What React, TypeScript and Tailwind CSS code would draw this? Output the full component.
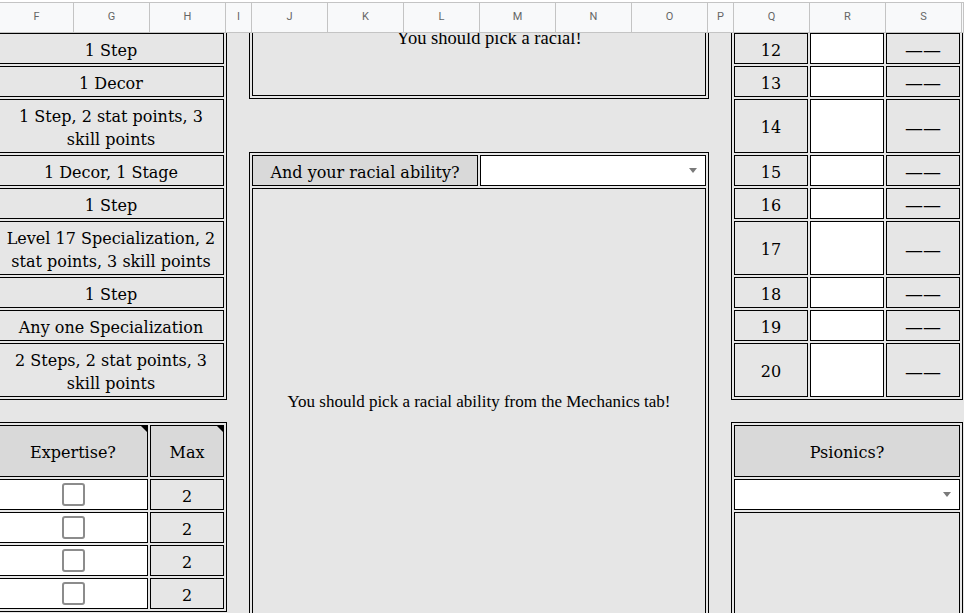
import React from 'react';

const serif = "font-['DejaVu_Serif',serif]";

const leftRows = [
  { text: '1 Step', tall: false },
  { text: '1 Decor', tall: false },
  { text: '1 Step, 2 stat points, 3 skill points', tall: true },
  { text: '1 Decor, 1 Stage', tall: false },
  { text: '1 Step', tall: false },
  { text: 'Level 17 Specialization, 2 stat points, 3 skill points', tall: true },
  { text: '1 Step', tall: false },
  { text: 'Any one Specialization', tall: false },
  { text: '2 Steps, 2 stat points, 3 skill points', tall: true },
];

const levels = [
  { n: 12, tall: false },
  { n: 13, tall: false },
  { n: 14, tall: true },
  { n: 15, tall: false },
  { n: 16, tall: false },
  { n: 17, tall: true },
  { n: 18, tall: false },
  { n: 19, tall: false },
  { n: 20, tall: true },
];

const headers = ['F', 'G', 'H', 'I', 'J', 'K', 'L', 'M', 'N', 'O', 'P', 'Q', 'R', 'S', ''];

function Cell({ children, className = '', text = true }: { children?: React.ReactNode; className?: string; text?: boolean }) {
  return (
    <div className={`flex items-center justify-center border border-black text-center ${text ? 'pt-[4px]' : ''} ${className}`}>
      {children}
    </div>
  );
}

// black corner mark that sheets shows for a note
function NoteMark() {
  return <span className="absolute top-0 right-0 h-0 w-0 border-t-[6px] border-l-[6px] border-t-black border-l-transparent" />;
}

function DropArrow() {
  return <span className="h-0 w-0 border-x-[4px] border-t-[5px] border-x-transparent border-t-[#7a7a7a]" />;
}

function Checkbox() {
  return <span className="block h-[23px] w-[23px] rounded-[3px] border-2 border-[#8c8c8c] bg-white" />;
}

export default function App() {
  return (
    <div className={`h-[613px] w-[964px] overflow-hidden bg-[#e6e6e6] text-black ${serif}`}>
      <div className="h-[33px] bg-white pt-[2px]">
        <div className="grid h-[31px] grid-cols-[74px_76px_76px_26px_76px_76px_76px_76px_76px_76px_26px_76px_76px_76px_1fr] border-y border-[#c4c4c4] bg-[#f8f9fa] font-['Roboto',sans-serif] text-[11px] text-[#666]">
          {headers.map((h, i) => (
            <div key={i} className="flex items-center justify-center border-r border-[#c4c4c4]">
              {h}
            </div>
          ))}
        </div>
      </div>

      <div className="flex h-[580px] items-start overflow-hidden">
        {/* left: rewards per level + expertise */}
        <div className="ml-[-5px] flex w-[232px] shrink-0 flex-col">
          <div className="mt-[-3px] flex flex-col gap-[2px] border border-black p-[2px] text-[16px] leading-[23px]">
            {leftRows.map((r, i) => (
              <Cell key={i} className={r.tall ? 'h-[54px] px-1' : 'h-[31px] px-1'}>
                {r.text}
              </Cell>
            ))}
          </div>
          <div className="mt-[22px] flex flex-col gap-[2px] border border-black p-[2px] text-[16px]">
            <div className="flex gap-[2px]">
              <Cell className="relative h-[52px] w-[150px] bg-[#d9d9d9]">
                Expertise?
                <NoteMark />
              </Cell>
              <Cell className="relative h-[52px] flex-1 bg-[#d9d9d9]">
                Max
                <NoteMark />
              </Cell>
            </div>
            {[0, 1, 2, 3].map((i) => (
              <div key={i} className="flex gap-[2px]">
                <Cell text={false} className="h-[31px] w-[150px] bg-white">
                  <Checkbox />
                </Cell>
                <Cell className="h-[31px] flex-1">2</Cell>
              </div>
            ))}
          </div>
        </div>

        {/* middle: racial */}
        <div className="ml-[22px] flex w-[460px] shrink-0 flex-col">
          <div className="mt-[-10px] border border-black p-[2px]">
            <div className="flex h-[70px] justify-center border border-black pl-[20px] pt-[2px] font-['Liberation_Serif',serif] text-[18.5px] leading-[19px]">
              You should pick a racial!
            </div>
          </div>
          <div className="mt-[53px] flex flex-col gap-[2px] border border-black p-[2px]">
            <div className="flex gap-[2px]">
              <Cell className="h-[31px] w-[226px] bg-[#d9d9d9] text-[16px]">And your racial ability?</Cell>
              <Cell text={false} className="h-[31px] flex-1 justify-end! bg-white pr-[8px]">
                <DropArrow />
              </Cell>
            </div>
            <Cell text={false} className="h-[427px] font-['Liberation_Serif',serif] text-[17px]">
              You should pick a racial ability from the Mechanics tab!
            </Cell>
          </div>
        </div>

        {/* right: levels + psionics */}
        <div className="ml-[22px] flex w-[232px] shrink-0 flex-col">
          <div className="mt-[-3px] flex flex-col gap-[2px] border border-black p-[2px] text-[16px]">
            {levels.map((l) => (
              <div key={l.n} className="flex gap-[2px]">
                <Cell className={l.tall ? 'h-[54px] flex-1' : 'h-[31px] flex-1'}>{l.n}</Cell>
                <Cell text={false} className={l.tall ? 'h-[54px] flex-1 bg-white' : 'h-[31px] flex-1 bg-white'} />
                <Cell className={l.tall ? 'h-[54px] flex-1 text-[18px]' : 'h-[31px] flex-1 text-[18px]'}>——</Cell>
              </div>
            ))}
          </div>
          <div className="mt-[22px] flex flex-col gap-[2px] border border-black p-[2px] text-[16px]">
            <Cell className="h-[52px] bg-[#d9d9d9]">Psionics?</Cell>
            <Cell text={false} className="h-[31px] justify-end! bg-white pr-[8px]">
              <DropArrow />
            </Cell>
            <Cell text={false} className="h-[110px]" />
          </div>
        </div>
      </div>
    </div>
  );
}
